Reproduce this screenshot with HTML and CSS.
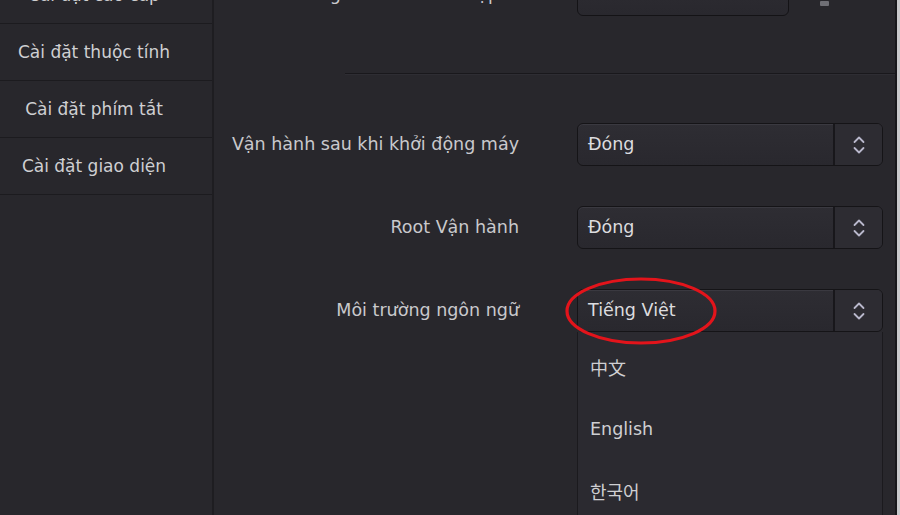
FILE: index.html
```html
<!DOCTYPE html>
<html lang="vi">
<head>
<meta charset="utf-8">
<link rel="stylesheet" href="styles.css">
</head>
<body>
<div class="app">
  <nav class="sidebar">
    <div class="nav-item">Cài đặt cao cấp</div>
    <div class="nav-item">Cài đặt thuộc tính</div>
    <div class="nav-item">Cài đặt phím tắt</div>
    <div class="nav-item">Cài đặt giao diện</div>
  </nav>
  <main class="main">
    <div class="form top-form">
      <div class="label top-label">Đường dẫn lưu ảnh chụp</div>
      <div class="top-cell">
        <div class="top-select"></div>
        <span class="folder-icon"></span>
      </div>
    </div>
    <div class="separator"></div>
    <div class="form">
      <div class="label">Vận hành sau khi khởi động máy</div>
      <div class="select">
        <span class="value">Đóng</span>
        <span class="arrow"><svg width="14" height="24" viewBox="0 0 14 24"><path d="M2.5 9 L7 4.5 L11.5 9 M2.5 15 L7 19.5 L11.5 15" fill="none" stroke="#b9b8cc" stroke-width="1.8" stroke-linecap="round" stroke-linejoin="round"/></svg></span>
      </div>
      <div class="label">Root Vận hành</div>
      <div class="select">
        <span class="value">Đóng</span>
        <span class="arrow"><svg width="14" height="24" viewBox="0 0 14 24"><path d="M2.5 9 L7 4.5 L11.5 9 M2.5 15 L7 19.5 L11.5 15" fill="none" stroke="#b9b8cc" stroke-width="1.8" stroke-linecap="round" stroke-linejoin="round"/></svg></span>
      </div>
      <div class="label">Môi trường ngôn ngữ</div>
      <div class="select-wrap">
        <div class="select">
          <span class="value">Tiếng Việt</span>
          <span class="arrow"><svg width="14" height="24" viewBox="0 0 14 24"><path d="M2.5 9 L7 4.5 L11.5 9 M2.5 15 L7 19.5 L11.5 15" fill="none" stroke="#b9b8cc" stroke-width="1.8" stroke-linecap="round" stroke-linejoin="round"/></svg></span>
        </div>
        <svg class="ring" width="160" height="74" viewBox="0 0 160 74"><ellipse cx="80" cy="37" rx="74" ry="32" fill="none" stroke="#e3141b" stroke-width="3.2"/></svg>
        <ul class="dropdown">
          <li class="opt cjk">中文</li>
          <li class="opt">English</li>
          <li class="opt cjk">한국어</li>
        </ul>
      </div>
    </div>
  </main>
</div>
</body>
</html>
```
FILE: styles.css
```css
html, body {
  margin: 0;
  padding: 0;
}
body {
  width: 900px;
  height: 515px;
  overflow: hidden;
  background: #c9c9cc;
  font-family: "DejaVu Sans", "Noto Sans CJK SC", sans-serif;
  font-size: 17.5px;
}
.app {
  width: 895px;
  height: 560px;
  margin-top: -33px;
  display: flex;
  background: #28272c;
  border-right: 2px solid #18171b;
}
.sidebar {
  width: 212px;
  flex: none;
  border-right: 2px solid #1e1d21;
}
.nav-item {
  height: 56px;
  border-bottom: 1px solid #1c1b1f;
  display: flex;
  align-items: center;
  justify-content: center;
  padding-right: 24px;
  color: #cfcfd2;
  font-size: 17px;
}
.main {
  flex: 1;
  padding-top: 6px;
}
.form {
  display: grid;
  grid-template-columns: 1fr 306px;
  column-gap: 58px;
  row-gap: 40px;
  padding: 48px 12px 0 0;
  align-items: start;
}
.top-form {
  padding-top: 0;
}
.top-label {
  white-space: nowrap;
  padding-right: 20px;
}
.top-cell {
  display: flex;
  align-items: flex-end;
}
.top-select {
  width: 212px;
  height: 43px;
  box-sizing: border-box;
  border: 1px solid #141316;
  border-radius: 6px;
  background: linear-gradient(#2e2d33, #29282e);
}
.folder-icon {
  width: 9px;
  height: 5px;
  margin: 0 0 10px 31px;
  background: #6f6f75;
  border-radius: 1px;
}
.separator {
  height: 1px;
  margin: 57px 0 0 131px;
  background: #19181c;
  border-bottom: 1px solid #2e2d33;
}
.label {
  color: #c9c9cc;
  text-align: right;
  line-height: 43px;
}
.select-wrap {
  position: relative;
}
.select {
  height: 43px;
  box-sizing: border-box;
  border: 1px solid #151417;
  border-radius: 6px;
  background: linear-gradient(#2e2d33, #29282e);
  box-shadow: inset 0 1px 0 #3a3940;
  display: flex;
  color: #dcdcdf;
  position: relative;
}
.value {
  flex: 1;
  padding-left: 10px;
  line-height: 41px;
}
.arrow {
  width: 47px;
  border-left: 2px solid #18171b;
  display: flex;
  align-items: center;
  justify-content: center;
  background: #2d2c32;
  border-radius: 0 5px 5px 0;
}
.ring {
  position: absolute;
  left: -16px;
  top: -15px;
}
.dropdown {
  list-style: none;
  margin: 0;
  padding: 4px 0 0;
  height: 200px;
  background: #2b2a30;
  border: 1px solid #1b1a1e;
  border-top: none;
}
.opt {
  height: 62px;
  line-height: 62px;
  padding-left: 12px;
  color: #cfcfd2;
}
.cjk {
  font-family: "Noto Sans CJK KR", "Noto Sans CJK SC", sans-serif;
  font-size: 18px;
}
```
